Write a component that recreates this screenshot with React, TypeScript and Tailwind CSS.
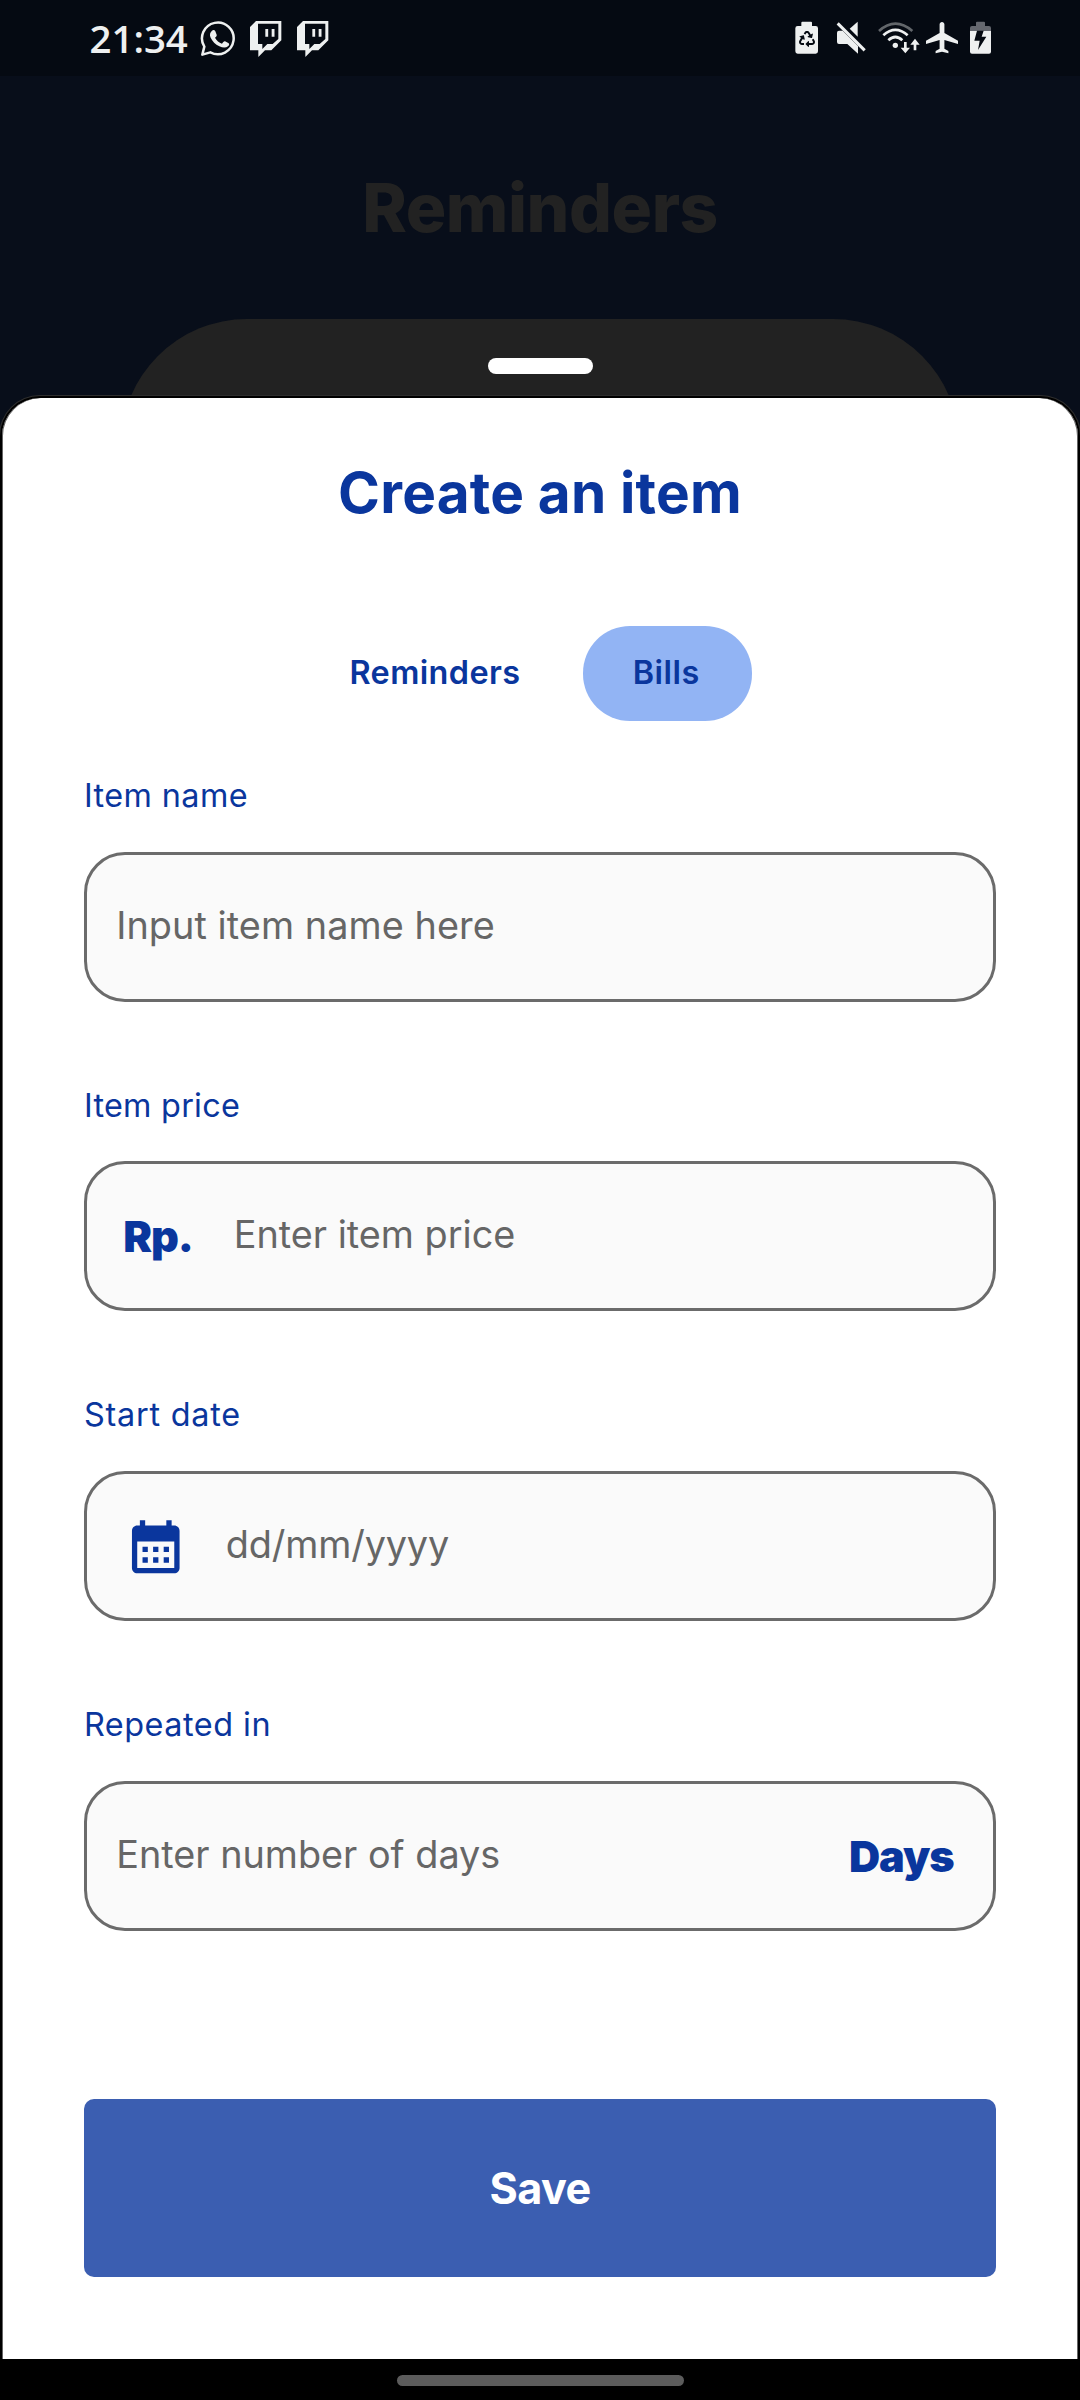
import type { ReactNode } from "react";
import { FaRecycle } from "react-icons/fa";

const ICON = "#eef0f0";

function StatusIcon({ x, w, children }: { x: number; w: number; children: ReactNode }) {
  return (
    <svg
      className="h-10 shrink-0"
      width={w / 3}
      height={40}
      viewBox={`${x} 60 ${w} 120`}
      fill={ICON}
    >
      {children}
    </svg>
  );
}

function WhatsApp() {
  return (
    <StatusIcon x={390} w={141}>
      <path
        d="M397 164 L403 140 A47.5 47.5 0 1 1 421 157 Z"
        fill="none"
        stroke={ICON}
        strokeWidth="7.5"
        strokeLinejoin="round"
      />
      <path d="M426 92 C430 89 434 90 436 94 L440 104 C441 107 439 110 435 113 C440 122 447 128 456 131 C459 127 462 123 465 124 L475 129 C479 131 478 136 474 139 C468 144 459 144 448 139 C436 133 427 124 422 113 C418 104 420 97 426 92 Z" />
    </StatusIcon>
  );
}

function Twitch() {
  return (
    <StatusIcon x={531} w={141}>
      <path
        fillRule="evenodd"
        d="M558 63 H634 V121 L604 151 H585 L565 171 V151 H540 V81 Z M564 71 V132 H577 V147 L592 132 H608 L625 117 V71 Z"
      />
      <path d="M586 87 h8.500 v23 h-8.500 Z M605 87 h8.500 v23 h-8.500 Z" />
    </StatusIcon>
  );
}

function StatusBar() {
  return (
    <div className="flex h-[76px] items-center justify-between bg-[#050a12] pl-[89.5px] pr-[90px]">
      <div className="flex items-center">
        <span className="w-[110.500px] font-['Open_Sans',sans-serif] text-[38.4px] font-semibold leading-none text-[#eef0f0]">
          21:34
        </span>
        <div className="mt-1 flex">
          <WhatsApp />
          <Twitch />
          <Twitch />
        </div>
      </div>
      <div className="mt-1 flex w-[200px]">
        <div className="relative flex">
          <StatusIcon x={60} w={120}>
            <path d="M94 78 V68 q0 -3 3 -3 h26 q3 0 3 3 V78 h11 q7 0 7 7 V154 q0 7 -7 7 H83 q-7 0 -7 -7 V85 q0 -7 7 -7 Z" />
          </StatusIcon>
          <FaRecycle className="absolute left-[8.500px] top-[10.500px] text-[#050a12]" size={16} />
        </div>
        <StatusIcon x={180} w={120}>
          <path d="M239 86 L263 65 V110 Z" />
          <path d="M207 92 L218 92 L264 138 V161 L232 132 H207 q-6 0 -6 -6 V98 q0 -6 6 -6 Z" />
          <path d="M207 67 L288 148" stroke="#050a12" strokeWidth="5" />
          <path d="M203 70 L284 151" stroke={ICON} strokeWidth="9" />
        </StatusIcon>
        <StatusIcon x={300} w={159}>
          <g fill="none" stroke={ICON} strokeWidth="8">
            <path d="M327 93 Q376 49 427 93" opacity="0.4" />
            <path d="M340 106 Q376 73 413 106" />
            <path d="M355 121 Q376 101 397 121" />
          </g>
          <circle cx="376" cy="136" r="8" />
          <path d="M402 126 h8 v17 h10 L406 160 L392 143 h10 Z" />
          <path d="M431 151 h8 V134 h10 L435 116 L421 134 h10 Z" />
        </StatusIcon>
        <StatusIcon x={459} w={120}>
          <path
            transform="translate(458.400 56.600) scale(4.800 4.700)"
            d="M22 16v-2l-8.500-5V3.500c0-.83-.67-1.500-1.500-1.500s-1.500.67-1.500 1.500V9L2 14v2l8.500-2.500V19L8 20.500V22l4-1 4 1v-1.500L13.500 19v-5.500L22 16z"
          />
        </StatusIcon>
        <StatusIcon x={579} w={100}>
          <path
            d="M618 78 V68 q0 -3 3 -3 h21 q3 0 3 3 V78 h12 q6 0 6 6 V93 H600 V84 q0 -6 6 -6 Z"
            fill="#65686f"
          />
          <path d="M600 93 H663 V155 q0 6 -6 6 H606 q-6 0 -6 -6 Z" />
          <path d="M621 92 H641 L635 110 H649 L624 150 L629 122 H613 Z" fill="#050a12" />
        </StatusIcon>
      </div>
    </div>
  );
}

function CalendarIcon() {
  return (
    <svg width="63.500" height="63.500" viewBox="0 0 24 24" fill="#0a369d" className="mt-px shrink-0">
      <path d="M19 4h-1V2h-2v2H8V2H6v2H5c-1.110 0-1.990.9-1.990 2L3 20c0 1.100.89 2 2 2h14c1.100 0 2-.9 2-2V6c0-1.100-.9-2-2-2zm0 16H5V10h14v10zM9 14H7v-2h2v2zm4 0h-2v-2h2v2zm4 0h-2v-2h2v2zm-8 4H7v-2h2v2zm4 0h-2v-2h2v2zm4 0h-2v-2h2v2z" />
    </svg>
  );
}

function Field({
  label,
  tracking = "tracking-[0.5px]",
  children,
}: {
  label: string;
  tracking?: string;
  children: ReactNode;
}) {
  return (
    <div className="flex flex-col gap-[36.600px]">
      <label className={`h-10 pt-px text-[32.4px] leading-[40px] text-[#0a369d] ${tracking}`}>{label}</label>
      <div className="flex h-[150px] items-center rounded-[41px] border-3 border-[#6b6b6b] bg-[#fafafa]">
        {children}
      </div>
    </div>
  );
}

const placeholder = "text-[37.8px] leading-[48px] text-[#666666] whitespace-nowrap";
const affix = "text-[43.2px] font-black leading-[52px] tracking-[-1.1px] text-[#0a369d]";

export default function App() {
  return (
    <div className="flex h-[2400px] w-[1080px] flex-col overflow-hidden bg-[#080e1a] font-['Inter',sans-serif]">
      <StatusBar />

      <header className="flex h-[243px] shrink-0 flex-col items-center pt-[91.500px]">
        <h1 className="h-20 text-[67.5px] font-extrabold leading-[80px] tracking-[-0.45px] text-[#222222]">
          Reminders
        </h1>
      </header>

      <div className="h-[77px] shrink-0 overflow-hidden px-[121px]">
        <div className="flex h-[300px] justify-center rounded-[126px] bg-[#222222] pt-[39px]">
          <div className="h-4 w-[105px] rounded-full bg-white" />
        </div>
      </div>

      <main className="flex h-[1963px] shrink-0 flex-col rounded-t-[40px] border-x-2 border-t-2 border-black bg-white px-[82px] pt-[54.400px] shadow-[0_0_0_1px_#2e2e2e,inset_1px_0_0_#666,inset_-1px_0_0_#666]">
        <h2 className="h-20 pt-px text-center text-[56.7px] font-bold leading-[80px] tracking-[0.2px] text-[#0a369d]">
          Create an item
        </h2>

        <div className="mt-[93.600px] flex h-[94.600px] items-center text-[32.4px] font-semibold text-[#0a369d]">
          <button className="ml-[215.500px] flex h-full w-[283.500px] items-center pl-[50px] pt-px tracking-[0.4px]">
            Reminders
          </button>
          <button className="flex h-full w-[168.500px] items-center rounded-[47px] bg-[#92b4f4] pl-[49.700px] pt-px tracking-[0.5px]">
            Bills
          </button>
        </div>

        <div className="mt-[54.400px] flex flex-col gap-[83.070px]">
          <Field label="Item name" tracking="tracking-[0.4px]">
            <span className={`${placeholder} pb-[2.6px] pl-[29.200px] tracking-[0.07px]`}>Input item name here</span>
          </Field>
          <Field label="Item price" tracking="tracking-[0.25px]">
            <span className={`${affix} w-[146.700px] pl-[36.300px]`}>Rp.</span>
            <span className={`${placeholder} pb-[4px]`}>Enter item price</span>
          </Field>
          <Field label="Start date" tracking="tracking-[0.75px]">
            <div className="flex w-[138.800px] pl-[36.700px]">
              <CalendarIcon />
            </div>
            <span className={`${placeholder} pb-[4px] tracking-[-0.15px]`}>dd/mm/yyyy</span>
          </Field>
          <Field label="Repeated in">
            <span className={`${placeholder} w-[762.000px] pb-[2.6px] pl-[29.200px]`}>Enter number of days</span>
            <span className={affix}>Days</span>
          </Field>
        </div>

        <button className="mt-[168.300px] h-[178px] shrink-0 rounded-[10px] bg-[#3b5eb1] pt-[2px] text-[43.2px] font-bold tracking-[-0.6px] text-white">
          Save
        </button>
      </main>

      <footer className="flex h-[41px] shrink-0 justify-center bg-black pt-4">
        <div className="h-[11px] w-[287px] rounded-full bg-[#5c5c5c]" />
      </footer>
    </div>
  );
}
